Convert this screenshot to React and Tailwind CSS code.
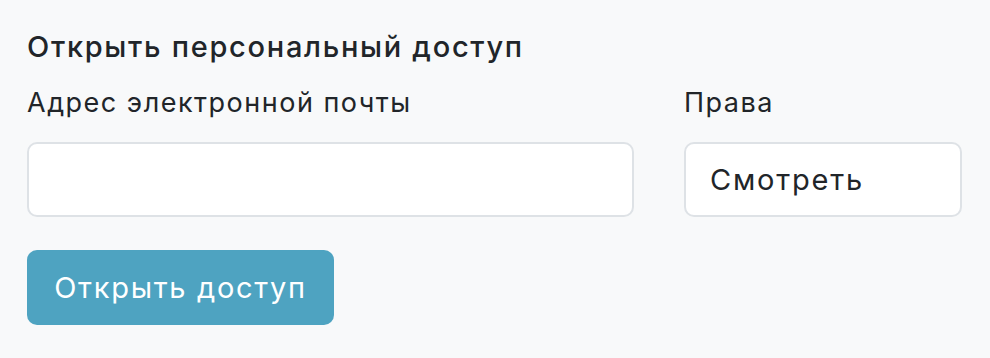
export default function App() {
  return (
    <div className="min-h-[358px] w-full bg-[#f8f9fa] px-[27px] pt-[27px] font-['Inter',sans-serif] text-[#212529]">
      <div className="text-[29px] font-medium leading-[40px] tracking-[1.7px]">Открыть персональный доступ</div>
      <div className="mt-[18px] flex gap-[50px]">
        <div className="flex w-[607px] flex-col">
          <label className="text-[27px] leading-[36px] tracking-[1.5px]">Адрес электронной почты</label>
          <input
            type="text"
            className="mt-[21px] h-[75px] w-full rounded-[10px] border-2 border-[#dee2e6] bg-white px-[24px] text-[28px] outline-none"
          />
        </div>
        <div className="flex w-[278px] flex-col">
          <label className="text-[27px] leading-[36px] tracking-[1.5px]">Права</label>
          <div className="mt-[21px] flex h-[75px] w-full items-center rounded-[10px] border-2 border-[#dee2e6] bg-white px-[24px] text-[29px] tracking-[1.8px]">
            Смотреть
          </div>
        </div>
      </div>
      <button className="mt-[33px] flex h-[75px] w-[307px] items-center justify-center rounded-[10px] bg-[#4ea3c1] text-[29px] tracking-[1.7px] text-white">
        Открыть доступ
      </button>
    </div>
  );
}
